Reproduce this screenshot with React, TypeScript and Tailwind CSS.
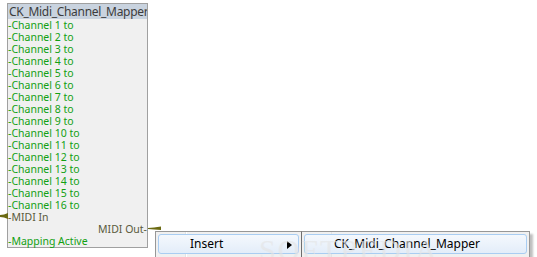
import React from "react";

const channels = Array.from({ length: 16 }, (_, i) => `-Channel ${i + 1} to`);

function MenuItem({ label, arrow, textLeft }: { label: string; arrow?: boolean; textLeft: string }) {
  return (
    <div className="mx-[2px] mt-[2px] h-[20px] rounded-[3px] border border-[#a9cdf2] bg-gradient-to-b from-[#f4f8fd] to-[#e3edf9] flex items-center relative">
      <span className={`${textLeft} text-[12px] text-black`}>{label}</span>
      {arrow && (
        <svg className="absolute right-[6px] top-[6px]" width="5" height="8" viewBox="0 0 5 8">
          <polygon points="0,0 5,4 0,8" fill="#000" />
        </svg>
      )}
    </div>
  );
}

export default function App() {
  return (
    <div
      className="w-[537px] h-[257px] bg-white relative overflow-hidden"
      style={{ fontFamily: "'Noto Sans', 'Open Sans', sans-serif" }}
    >
      <div className="ml-[7px] mt-[3px] w-[141px] border border-[#a0a0a0] bg-[#f0f0f0] relative">
        <div className="h-[15px] bg-[#c9d3df] text-[12px] leading-[15px] text-[#3c3c3c] pl-[1px] whitespace-nowrap overflow-hidden tracking-[-0.3px]">
          CK_Midi_Channel_Mapper
        </div>
        <div className="text-[10.5px] leading-[12px] whitespace-nowrap">
          {channels.map((c) => (
            <div key={c} className="h-[12px] text-[#12a012]">{c}</div>
          ))}
          <div className="h-[12px] text-[#5b5b3c]">-MIDI In</div>
          <div className="h-[12px] text-[#5b5b3c] text-right">MIDI Out-</div>
          <div className="h-[12px] text-[#12a012]">-Mapping Active</div>
        </div>

        {/* input pin */}
        <svg className="absolute left-[-8px] top-[209px]" width="8" height="6" viewBox="0 0 8 6">
          <polygon points="0,2 4,1.5 8,0 8,6 4,4.5 0,4" fill="#6b6a12" />
        </svg>
        {/* output pin */}
        <svg className="absolute left-[140px] top-[222px]" width="13" height="5" viewBox="0 0 13 5">
          <polygon points="0,2 6,1.5 13,0.5 13,4 6,3.5 0,3" fill="#6b6a12" />
        </svg>
      </div>

      {/* context menu */}
      <div className="absolute left-[155px] top-[231px] flex">
        <div className="w-[146px] h-[40px] border border-[#979797] border-r-0 bg-[#f0f0f0] relative">
          <div className="absolute left-[29px] top-0 bottom-0 w-[1px] bg-[#e2e3e3]" />
          <div className="absolute left-[30px] top-0 bottom-0 w-[1px] bg-white" />
          <MenuItem label="Insert" arrow textLeft="ml-[31px]" />
        </div>
        <div className="w-[229px] h-[40px] border border-[#979797] border-l-[#6e6e6e] bg-[#f0f0f0] relative shadow-[3px_3px_2px_rgba(0,0,0,0.25)]">
          <div className="absolute left-[29px] top-0 bottom-0 w-[1px] bg-[#e2e3e3]" />
          <MenuItem label="CK_Midi_Channel_Mapper" textLeft="ml-[29px]" />
        </div>
        <div
          className="absolute left-[104px] top-[-4px] text-[30px] text-[#e4e4e4] opacity-60 tracking-[2px] pointer-events-none"
          style={{ fontFamily: "'Liberation Serif', serif" }}
        >
          SOFTPEDIA
        </div>
      </div>
    </div>
  );
}
